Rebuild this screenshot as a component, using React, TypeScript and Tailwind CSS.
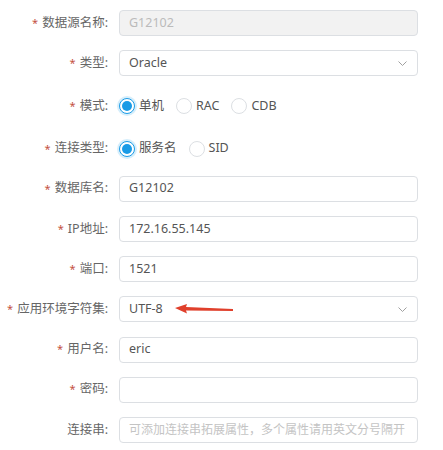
import React from "react";

const font = { fontFamily: '"Noto Sans", "Noto Sans CJK SC", sans-serif' };

const inputBox =
    "flex h-[26px] w-[299px] items-center overflow-hidden whitespace-nowrap rounded-[4px] border border-[#dcdfe3] px-[9px]";

function Label({ text, required = true }: { text: string; required?: boolean }) {
    return (
        <div className="flex w-[108px] shrink-0 items-center justify-end text-[12.5px] text-[#666]">
            {required && <span className="mr-[4px] text-[11px] text-[#c4513f]">*</span>}
            <span>{text}:</span>
        </div>
    );
}

function Radio({ label, checked }: { label: string; checked?: boolean }) {
    return (
        <label className="flex items-center gap-[4px] text-[12.5px] text-[#555]">
            {checked ? (
                <span className="flex h-[16px] w-[16px] items-center justify-center rounded-full border border-[#1a9be6] bg-white shadow-[0_0_0_2px_#d6eefb]">
                    <span className="h-[10px] w-[10px] rounded-full bg-[#1a9be6]" />
                </span>
            ) : (
                <span className="h-[16px] w-[16px] rounded-full border border-[#dcdfe3] bg-white" />
            )}
            <span>{label}</span>
        </label>
    );
}

function Chevron() {
    return (
        <svg width="9" height="5" viewBox="0 0 9 5" className="ml-auto mr-[1px]">
            <path d="M0.5 0.5 L4.5 4.5 L8.5 0.5" fill="none" stroke="#a0a0a0" strokeWidth="1" />
        </svg>
    );
}

function Row({ children, tall }: { children: React.ReactNode; tall?: boolean }) {
    return (
        <div className={tall ? "flex h-[28.5px] items-center gap-[11px] pt-[3px]" : "flex h-[26px] items-center gap-[11px]"}>
            {children}
        </div>
    );
}

export default function App() {
    return (
        <div className="h-[450px] w-[443px] bg-white pt-[10px]" style={font}>
            <div className="flex flex-col gap-[14.2px]">
                <Row>
                    <Label text="数据源名称" />
                    <div className={inputBox + " bg-[#f2f2f2] text-[12.5px] text-[#bbb]"}>G12102</div>
                </Row>
                <Row>
                    <Label text="类型" />
                    <div className={inputBox + " bg-white text-[12.5px] text-[#555]"}>
                        Oracle
                        <Chevron />
                    </div>
                </Row>
                <Row tall>
                    <Label text="模式" />
                    <div className="flex items-center gap-[12px]">
                        <Radio label="单机" checked />
                        <Radio label="RAC" />
                        <Radio label="CDB" />
                    </div>
                </Row>
                <Row tall>
                    <Label text="连接类型" />
                    <div className="flex items-center gap-[12px]">
                        <Radio label="服务名" checked />
                        <Radio label="SID" />
                    </div>
                </Row>
                <Row>
                    <Label text="数据库名" />
                    <div className={inputBox + " bg-white text-[12.5px] text-[#555]"}>G12102</div>
                </Row>
                <Row>
                    <Label text="IP地址" />
                    <div className={inputBox + " bg-white text-[12.5px] text-[#555]"}>172.16.55.145</div>
                </Row>
                <Row>
                    <Label text="端口" />
                    <div className={inputBox + " bg-white text-[12.5px] text-[#555]"}>1521</div>
                </Row>
                <Row>
                    <Label text="应用环境字符集" />
                    <div className={inputBox + " relative bg-white text-[12.5px] text-[#555]"}>
                        UTF-8
                        <svg width="60" height="10" viewBox="0 0 60 10" className="absolute left-[55px] top-[7px]">
                            <path d="M0 4 L12 0 L11 3 L58 5 L58 7 L11 6.5 L12 9.5 Z" fill="#e0402c" />
                        </svg>
                        <Chevron />
                    </div>
                </Row>
                <Row>
                    <Label text="用户名" />
                    <div className={inputBox + " bg-white text-[12.5px] text-[#555]"}>eric</div>
                </Row>
                <Row>
                    <Label text="密码" />
                    <div className={inputBox + " bg-white"} />
                </Row>
                <Row>
                    <Label text="连接串" required={false} />
                    <div className={inputBox + " bg-white text-[12px] text-[#c4c4c4]"}>可添加连接串拓展属性，多个属性请用英文分号隔开</div>
                </Row>
            </div>
        </div>
    );
}
